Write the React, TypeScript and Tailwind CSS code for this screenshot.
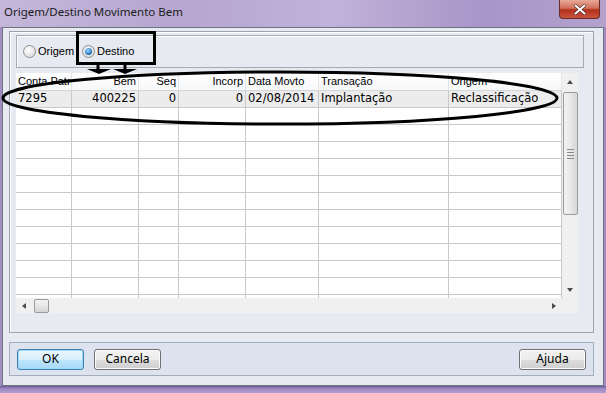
import React from 'react';

const cols = [
  { label: 'Conta Patr', w: 'w-[56px]', right: false },
  { label: 'Bem', w: 'w-[67px]', right: true },
  { label: 'Seq', w: 'w-[40px]', right: true },
  { label: 'Incorp', w: 'w-[67px]', right: true },
  { label: 'Data Movto', w: 'w-[73px]', right: false },
  { label: 'Transação', w: 'w-[130px]', right: false },
  { label: 'Origem', w: 'w-[113px]', right: false },
];

const firstRow = ['7295', '400225', '0', '0', '02/08/2014', 'Implantação', 'Reclassificação'];

function Radio({ checked }: { checked?: boolean }) {
  return (
    <span className="w-[13px] h-[13px] rounded-full border border-[#8e8f8f] bg-[radial-gradient(circle_at_40%_35%,#ffffff,#e2e2e2_65%,#cacaca)] flex items-center justify-center shrink-0">
      {checked && (
        <span className="w-[7px] h-[7px] rounded-full bg-[radial-gradient(circle_at_40%_35%,#a6dcff,#2a7cc4_60%,#0d4a86)]" />
      )}
    </span>
  );
}

function Arrow({ dir }: { dir: 'up' | 'down' | 'left' | 'right' }) {
  const pts = {
    up: '1,5 4,1 7,5',
    down: '1,1 4,5 7,1',
    left: '5,1 1,4 5,7',
    right: '1,1 5,4 1,7',
  }[dir];
  const vert = dir === 'up' || dir === 'down';
  return (
    <svg width={vert ? 8 : 6} height={vert ? 6 : 8} viewBox={vert ? '0 0 8 6' : '0 0 6 8'}>
      <polygon points={pts} fill="#4d4d4d" />
    </svg>
  );
}

function Button({ label, primary }: { label: string; primary?: boolean }) {
  return (
    <button
      className={
        primary
          ? 'w-[67px] h-[21px] rounded-[3px] border border-[#3c7fb1] bg-[linear-gradient(#eaf6fd,#d9f0fc_50%,#bee6fd_51%,#a7d9f5)] shadow-[inset_0_0_0_1px_#9fd8f7] text-[12px] text-black'
          : 'w-[67px] h-[21px] rounded-[3px] border border-[#707070] bg-[linear-gradient(#f2f2f2,#ebebeb_50%,#dddddd_51%,#cfcfcf)] shadow-[inset_0_0_0_1px_#fcfcfc] text-[12px] text-black'
      }
    >
      {label}
    </button>
  );
}

export default function App() {
  const emptyRows = Array.from({ length: 12 });
  return (
    <div className="w-[606px] h-[393px] relative overflow-hidden flex flex-col bg-[#a28dc2] font-['Liberation_Sans',Arial,sans-serif] text-black">
      {/* title bar */}
      <div className="h-[27px] flex justify-between bg-[linear-gradient(90deg,#c4b7da,#b6a6d0_30%,#c0b2d8_55%,#a994c8_80%,#b3a2ce)]">
        <span className="pl-[4px] pt-[3px] text-[11.5px] font-['Noto_Sans',sans-serif] text-[#1b1b1b]">Origem/Destino Movimento Bem</span>
        <div className="mr-[6px] w-[41px] h-[19px] rounded-b-[4px] border border-t-0 border-[#6b2a26] bg-[linear-gradient(#e9a99a,#d0705c_45%,#b2301b_55%,#c8533c)] flex items-center justify-center">
          <svg width="12" height="11" viewBox="0 0 12 11">
            <path d="M1.5 1.5 L10.5 9.5 M10.5 1.5 L1.5 9.5" stroke="#4a2a2a" strokeWidth="3.2" strokeLinecap="round" />
            <path d="M1.5 1.5 L10.5 9.5 M10.5 1.5 L1.5 9.5" stroke="#ffffff" strokeWidth="2" strokeLinecap="round" />
          </svg>
        </div>
      </div>

      {/* client */}
      <div className="mx-[2px] h-[359px] border border-[#6e7382] bg-[#e7eaf0] px-[6px] pt-[3px]">
        <div className="w-[585px] h-[302px] border border-[#9ea3ad] shadow-[inset_1px_1px_0_#ffffff] px-[6px] pt-[3px]">
          {/* group box */}
          <div className="w-[568px] h-[33px] border border-[#a5aab3] shadow-[inset_1px_1px_0_#ffffff] flex items-center pl-[6px] text-[11px]">
            <div className="flex items-center gap-[2px]">
              <Radio />
              <span>Origem</span>
            </div>
            <div className="flex items-center gap-[2px] ml-[8px]">
              <Radio checked />
              <span>Destino</span>
            </div>
          </div>

          {/* grid */}
          <div className="mt-[5px] w-[562px] h-[240px] bg-white flex flex-col">
            <div className="flex h-[225px]">
              <div className="w-[546px] overflow-hidden">
                <div className="flex h-[18px] border-b border-[#d5d5d5] text-[11px] bg-[linear-gradient(#ffffff,#f7f8fa)]">
                  {cols.map((c, i) => (
                    <div
                      key={i}
                      className={`${c.w} shrink-0 px-[2px] border-r border-[#e3e4e6] flex items-center ${c.right ? 'justify-end' : ''} whitespace-nowrap overflow-hidden`}
                    >
                      {c.label}
                    </div>
                  ))}
                </div>
                <div className="flex h-[17px] bg-[#ececec] border-b border-[#c9c9c9] text-[11.5px] font-['DejaVu_Sans',sans-serif]">
                  {cols.map((c, i) => (
                    <div
                      key={i}
                      className={`${c.w} shrink-0 px-[2px] border-r border-[#c9c9c9] flex items-center ${c.right ? 'justify-end' : ''} whitespace-nowrap overflow-hidden`}
                    >
                      {firstRow[i]}
                    </div>
                  ))}
                </div>
                {emptyRows.map((_, r) => (
                  <div key={r} className="flex h-[17px] border-b border-[#c9c9c9]">
                    {cols.map((c, i) => (
                      <div key={i} className={`${c.w} shrink-0 border-r border-[#c9c9c9]`} />
                    ))}
                  </div>
                ))}
              </div>
              {/* vertical scrollbar */}
              <div className="w-[16px] bg-[#f0f0f0] flex flex-col items-center">
                <div className="h-[17px] flex items-center justify-center">
                  <Arrow dir="up" />
                </div>
                <div className="mt-[2px] w-[15px] h-[123px] rounded-[2px] border border-[#9b9b9b] bg-[linear-gradient(90deg,#f3f3f3,#e8e8e8_50%,#d6d6d6)] flex flex-col items-center justify-center gap-[2px]">
                  <span className="w-[7px] h-px bg-[#8a8a8a]" />
                  <span className="w-[7px] h-px bg-[#8a8a8a]" />
                  <span className="w-[7px] h-px bg-[#8a8a8a]" />
                  <span className="w-[7px] h-px bg-[#8a8a8a]" />
                </div>
                <div className="flex-1" />
                <div className="h-[17px] flex items-center justify-center">
                  <Arrow dir="down" />
                </div>
              </div>
            </div>
            {/* horizontal scrollbar */}
            <div className="h-[15px] flex bg-[#f0f0f0]">
              <div className="w-[546px] flex items-center">
                <div className="w-[16px] flex justify-center">
                  <Arrow dir="left" />
                </div>
                <div className="ml-[2px] w-[15px] h-[14px] rounded-[2px] border border-[#9b9b9b] bg-[linear-gradient(#f3f3f3,#e6e6e6_50%,#d4d4d4)]" />
                <div className="flex-1" />
                <div className="w-[16px] flex justify-center">
                  <Arrow dir="right" />
                </div>
              </div>
              <div className="w-[16px] bg-[#f0f0f0]" />
            </div>
          </div>
        </div>

        {/* button panel */}
        <div className="mt-[9px] w-[585px] h-[34px] border border-[#a4adbd] bg-[#dce3ee] flex items-center justify-between px-[7px] font-['Noto_Sans',sans-serif]">
          <div className="flex gap-[10px]">
            <Button label="OK" primary />
            <Button label="Cancela" />
          </div>
          <Button label="Ajuda" />
        </div>
      </div>

      <div className="flex-1 bg-[linear-gradient(#6f5a96,#9f89c3_40%,#b19fd0)]" />

      {/* annotations drawn over the screenshot */}
      <svg className="absolute inset-0 pointer-events-none" width="606" height="393" viewBox="0 0 606 393">
        <rect x="77.5" y="32.5" width="77" height="31" fill="none" stroke="#000" strokeWidth="3" />
        <path d="M98 64 L98 70 M125 64 L125 70" stroke="#000" strokeWidth="3" />
        <polygon points="87,69 111,69 99,74" fill="#000" />
        <polygon points="113,69 137,69 125,74" fill="#000" />
        <ellipse cx="280" cy="98" rx="277" ry="26" fill="none" stroke="#000" strokeWidth="3" />
      </svg>
    </div>
  );
}
